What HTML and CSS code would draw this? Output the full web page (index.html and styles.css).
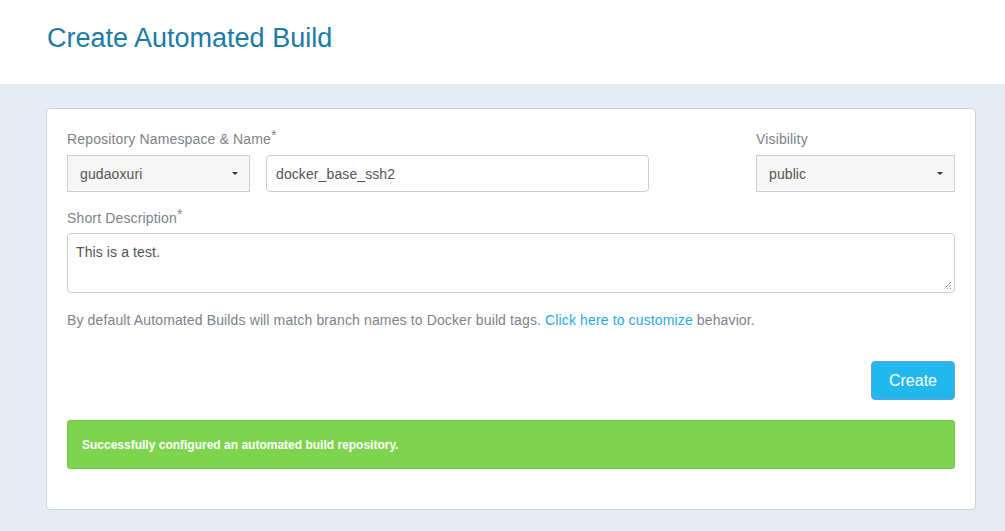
FILE: index.html
```html
<!DOCTYPE html>
<html>
<head>
<meta charset="utf-8">
<link rel="stylesheet" href="styles.css">
</head>
<body>
<header class="page-header">
  <h1 class="title">Create Automated Build</h1>
</header>
<main class="content">
  <section class="panel">
    <div class="row">
      <div class="field field-name">
        <label class="label">Repository Namespace &amp; Name<span class="req">*</span></label>
        <div class="name-inputs">
          <div class="select select-ns"><span>gudaoxuri</span><span class="caret"></span></div>
          <div class="input input-name">docker_base_ssh2</div>
        </div>
      </div>
      <div class="field field-vis">
        <label class="label">Visibility</label>
        <div class="select select-vis"><span>public</span><span class="caret"></span></div>
      </div>
    </div>
    <div class="field field-desc">
      <label class="label">Short Description<span class="req">*</span></label>
      <div class="textarea">This is a test.
        <svg class="grip" width="9" height="9" viewBox="0 0 9 9"><path d="M8 1L1 8M8 4L4 8M8 7L7 8" stroke="#555" stroke-width="1" stroke-dasharray="1 1"/></svg>
      </div>
    </div>
    <p class="help">By default Automated Builds will match branch names to Docker build tags. <a class="link" href="#">Click here to customize</a> behavior.</p>
    <div class="actions">
      <button class="btn-create">Create</button>
    </div>
    <div class="alert">Successfully configured an automated build repository.</div>
  </section>
</main>
</body>
</html>
```
FILE: styles.css
```css
* { box-sizing: border-box; }
html, body { margin: 0; padding: 0; }
body {
  font-family: "Liberation Sans", Arial, sans-serif;
  background: #e5ecf3;
  width: 1005px;
  height: 531px;
  overflow: hidden;
}
.page-header {
  background: #ffffff;
  height: 84px;
  padding: 23px 0 0 47px;
}
.title {
  margin: 0;
  font-weight: normal;
  font-size: 27px;
  line-height: 30px;
  color: #1b7aa6;
}
.content {
  padding: 24px 29px 0 46px;
}
.panel {
  background: #fff;
  border: 1px solid #c9d4df;
  border-radius: 4px;
  padding: 20px 20px 40px 20px;
  height: 402px;
}
.row {
  display: flex;
  justify-content: space-between;
}
.label {
  display: block;
  font-size: 14px;
  line-height: 20px;
  color: #7d828b;
  margin-bottom: 6px;
  letter-spacing: 0.15px;
}
.req { font-size: 14px; position: relative; top: -4px; }
.name-inputs {
  display: flex;
  gap: 16px;
}
.select {
  height: 37px;
  background: #f7f7f7;
  border: 1px solid #cccccc;
  display: flex;
  align-items: center;
  justify-content: space-between;
  padding: 0 11px 0 12px;
  font-size: 14px;
  color: #555;
  letter-spacing: 0.1px;
}
.select-ns { width: 183px; }
.select-vis { width: 199px; }
.caret {
  width: 0; height: 0;
  border-left: 3px solid transparent;
  border-right: 3px solid transparent;
  border-top: 3px solid #333;
}
.input {
  width: 383px;
  height: 37px;
  border: 1px solid #cccccc;
  border-radius: 4px;
  padding: 0 9px;
  display: flex;
  align-items: center;
  font-size: 14px;
  color: #555;
  letter-spacing: 0.1px;
}
.field-desc { margin-top: 16px; }
.field-desc .label { margin-bottom: 5px; }
.textarea {
  position: relative;
  height: 60px;
  border: 1px solid #cccccc;
  border-radius: 4px;
  padding: 8px 8px;
  font-size: 14px;
  line-height: 20px;
  color: #555;
  letter-spacing: 0.1px;
}
.grip { position: absolute; right: 2px; bottom: 2px; }
.help {
  margin: 17px 0 0 0;
  font-size: 14px;
  line-height: 20px;
  color: #7d828b;
  letter-spacing: 0.13px;
}
.link { color: #2aa9e0; text-decoration: none; }
.actions {
  display: flex;
  justify-content: flex-end;
  margin-top: 31px;
}
.btn-create {
  width: 84px;
  height: 39px;
  background: #22b8eb;
  border: 1px solid #5fa2e8;
  border-radius: 4px;
  color: #fff;
  font-family: "Liberation Sans", Arial, sans-serif;
  font-size: 16px;
  padding: 0;
}
.alert {
  margin-top: 20px;
  height: 49px;
  background: #7ed44e;
  border: 1px solid #6cc53c;
  border-radius: 3px;
  color: #fff;
  font-size: 12px;
  font-weight: bold;
  display: flex;
  align-items: center;
  padding: 0 14px;
}
```
